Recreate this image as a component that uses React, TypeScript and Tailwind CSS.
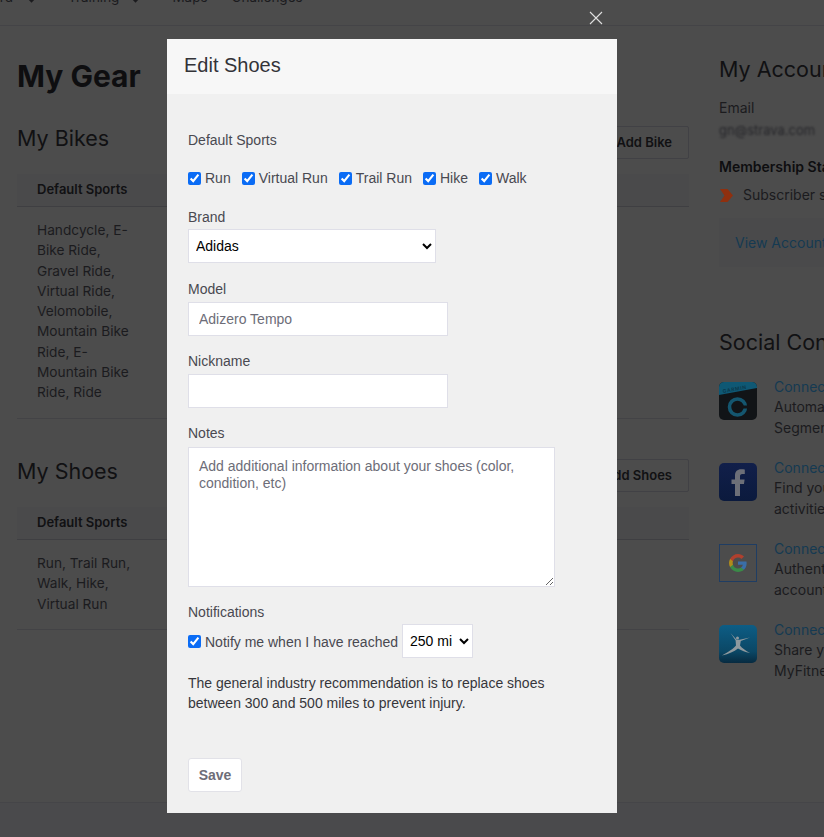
const Row = ({ label, children }: { label: string; children: React.ReactNode }) => (
    <div className="mt-[23px]">
        <div className="h-4 leading-4 mb-[4px]">{label}</div>
        {children}
    </div>
);

const Sport = ({ label }: { label: string }) => (
    <label className="flex items-center">
        <input type="checkbox" defaultChecked readOnly className="w-[13px] h-[13px] accent-[#0b6cf5] mr-[4px] ml-0" />
        <span>{label}</span>
    </label>
);

const Chevron = ({ className }: { className: string }) => (
    <svg width="9" height="6" viewBox="0 0 9 6" className={className}>
        <path d="M1 1L4.5 4.5L8 1" fill="none" stroke="#1b1b1e" strokeWidth="1.6" />
    </svg>
);

const GarminIcon = () => (
    <svg width="38" height="38" viewBox="0 0 38 38" className="rounded-[5px] shrink-0">
        <rect width="38" height="38" fill="#111417" />
        <path d="M0 0H38V6L0 13Z" fill="#0f5874" />
        <text x="4" y="11" fontSize="5" letterSpacing="0.6" fill="#0b3a4e" transform="rotate(-10 4 11)" fontFamily="Inter, sans-serif" fontWeight="700">GARMIN</text>
        <circle cx="18.5" cy="25" r="8" fill="none" stroke="#14566f" strokeWidth="3.6" />
        <rect x="24" y="23.5" width="6" height="3" fill="#111417" />
    </svg>
);

const FacebookIcon = () => (
    <svg width="38" height="38" viewBox="0 0 38 38" className="rounded-[5px] shrink-0">
        <defs>
            <linearGradient id="fb" x1="0" y1="0" x2="0" y2="1">
                <stop offset="0" stopColor="#111f4a" />
                <stop offset="1" stopColor="#0b1a3d" />
            </linearGradient>
        </defs>
        <rect width="38" height="38" fill="url(#fb)" />
        <path d="M21 33V21H25L25.6 16.5H21V13.5C21 12.2 21.5 11 23.3 11H25.8V6.6C25.2 6.5 23.7 6.3 22 6.3C18.4 6.3 16 8.4 16 12.5V16.5H12.5V21H16V33Z" fill="#6c6f78" />
    </svg>
);

const GoogleIcon = () => (
    <svg width="38" height="38" viewBox="0 0 38 38" className="shrink-0">
        <rect x="0.5" y="0.5" width="37" height="37" fill="none" stroke="#1f3d63" />
        <g transform="translate(10 10) scale(0.75)">
            <path d="M23.5 12.3c0-.8-.1-1.6-.2-2.3H12v4.4h6.5c-.3 1.5-1.1 2.7-2.4 3.6v3h3.8c2.3-2.1 3.6-5.2 3.6-8.7z" fill="#3a6ea8" />
            <path d="M12 24c3.2 0 6-1.1 7.9-2.9l-3.8-3c-1.1.7-2.4 1.2-4.1 1.2-3.1 0-5.8-2.1-6.7-5H1.4v3.1C3.4 21.3 7.4 24 12 24z" fill="#3a8a48" />
            <path d="M5.3 14.3c-.2-.7-.4-1.5-.4-2.3s.1-1.6.4-2.3V6.6H1.4C.5 8.2 0 10 0 12s.5 3.8 1.4 5.4z" fill="#b08c1c" />
            <path d="M12 4.8c1.8 0 3.3.6 4.6 1.8l3.4-3.4C17.9 1.2 15.2 0 12 0 7.4 0 3.4 2.7 1.4 6.6l3.9 3.1c.9-2.9 3.6-4.9 6.7-4.9z" fill="#b0402e" />
        </g>
    </svg>
);

const FitnessIcon = () => (
    <svg width="38" height="38" viewBox="0 0 38 38" className="rounded-[5px] shrink-0">
        <defs>
            <linearGradient id="mfp" x1="0" y1="0" x2="0" y2="1">
                <stop offset="0" stopColor="#0d5d85" />
                <stop offset="0.7" stopColor="#0b4765" />
                <stop offset="1" stopColor="#072a40" />
            </linearGradient>
        </defs>
        <rect width="38" height="38" fill="url(#mfp)" />
        <circle cx="18.5" cy="13" r="1.5" fill="#8f999e" />
        <path d="M11.5 8L16.6 15.5L17 20.5C14 24 10 26.5 3 30.5C10 29 15 26.5 19 23.5C23 25.5 26 27 31 28C26.5 25.5 23 23 21 20.5L21.8 16L31 12.5L20.5 14.8H17.6Z" fill="#8f999e" />
    </svg>
);

const Social = ({ icon, name, lines }: { icon: React.ReactNode; name: string; lines: string[] }) => (
    <div className="flex gap-[17px] h-[81px] items-start">
        <div>{icon}</div>
        <div className="text-sm leading-[20.3px] -mt-[5px] whitespace-nowrap text-[#1b1b1e]">
            <div className="text-[#153a52]">Connect with {name}</div>
            {lines.map((l) => <div key={l}>{l}</div>)}
        </div>
    </div>
);

const GearSection = ({ title, button, sports, rowH }: { title: string; button: string; sports: string; rowH: string }) => (
    <section>
        <div className="flex justify-between items-center h-[33px]">
            <h2 className="text-[21.5px] leading-[30px] mb-[10px] text-[#111113]">{title}</h2>
            <button className="h-[33px] px-4 border border-[#414145] rounded-[2px] text-[13px] font-semibold text-[#111113]">{button}</button>
        </div>
        <div className="mt-[15px] h-[33px] bg-[#4a4a4b] border-b border-[#3f3f42] pl-5 flex items-center text-[13px] font-semibold text-[#111113]">Default Sports</div>
        <div className={`${rowH} border-b border-[#434346] pl-5 pt-[13px] w-full text-[13.7px] leading-[20.3px] text-[#1b1b1e]`}>
            <div className="w-[100px]">{sports}</div>
        </div>
    </section>
);

export default function App() {
    return (
        <div className="relative h-[837px] w-[824px] overflow-hidden bg-[#4c4c4c] font-['Inter',sans-serif]">
            <nav className="h-[26px] border-b border-[#444447] flex items-end pb-[18px] text-[13.5px] text-[#1b1b1e] leading-[20px] -ml-[57px] whitespace-nowrap">
                <span className="w-[70px] text-right">Dashboard</span>
                <Chevron className="ml-[14px] mb-[4px]" />
                <span className="ml-[32px]">Training</span>
                <Chevron className="ml-[12px] mb-[4px]" />
                <span className="ml-[32px]">Maps</span>
                <span className="ml-[24px]">Challenges</span>
            </nav>
            <div className="flex pl-[17px] gap-[30px] pt-[31px]">
                <div className="w-[672px] shrink-0">
                    <h1 className="text-[30px] leading-[38px] font-bold text-[#0e0e10]">My Gear</h1>
                    <div className="mt-[31px]">
                        <GearSection title="My Bikes" button="Add Bike" rowH="h-[212px]"
                            sports="Handcycle, E-Bike Ride, Gravel Ride, Virtual Ride, Velomobile, Mountain Bike Ride, E-Mountain Bike Ride, Ride" />
                    </div>
                    <div className="mt-[40px]">
                        <GearSection title="My Shoes" button="Add Shoes" rowH="h-[90px]"
                            sports="Run, Trail Run, Walk, Hike, Virtual Run" />
                    </div>
                </div>
                <div className="w-[300px] shrink-0 text-sm text-[#1b1b1e]">
                    <h2 className="text-[21.5px] leading-[30px] text-[#111113] mt-[-3px] whitespace-nowrap">My Account</h2>
                    <div className="mt-[14px] leading-5">Email</div>
                    <div className="leading-5 mt-[2px] blur-[1px] text-[13px] text-[#26262a]">gn@strava.com</div>
                    <div className="mt-[17px] leading-5 font-semibold text-[#0e0e10] whitespace-nowrap">Membership Status</div>
                    <div className="mt-[8px] flex items-center gap-[10px] leading-5 whitespace-nowrap">
                        <svg width="13" height="13" viewBox="0 0 13 13" className="ml-[1px]">
                            <path d="M0 0H7.5L13 6.5L7.5 13H0L4.5 6.5Z" fill="#8f300f" />
                        </svg>
                        Subscriber since 2019
                    </div>
                    <div className="mt-[13px] h-[49px] w-[300px] bg-[#4a4a4b] pl-4 flex items-center text-[#153a52] whitespace-nowrap">View Account</div>
                    <h2 className="mt-[60px] text-[21.5px] leading-[30px] text-[#111113] whitespace-nowrap">Social Connections</h2>
                    <div className="mt-[25px]">
                        <Social icon={<GarminIcon />} name="Garmin" lines={["Automatically upload your activities", "Segments and more"]} />
                        <Social icon={<FacebookIcon />} name="Facebook" lines={["Find your friends and share", "activities"]} />
                        <Social icon={<GoogleIcon />} name="Google" lines={["Authenticate with your Google", "account"]} />
                        <Social icon={<FitnessIcon />} name="MyFitnessPal" lines={["Share your activities with", "MyFitnessPal"]} />
                    </div>
                </div>
            </div>
            <div className="absolute left-0 right-0 bottom-0 h-[35px] border-t border-[#454548] bg-[#4a4a4c]" />

            <svg width="16" height="16" viewBox="0 0 16 16" className="absolute left-[588px] top-[10px]">
                <path d="M2 2L14 14M14 2L2 14" stroke="#e0e0e0" strokeWidth="1.1" />
            </svg>
            <div className="absolute left-[167px] top-[39px] w-[450px] h-[774px] bg-[#f0f0f0] font-['Liberation_Sans',sans-serif] text-sm text-[#494950]">
                <div className="h-[55px] bg-[#f7f7f7] pl-[17px] pb-[4px] flex items-center text-xl text-[#333338]">Edit Shoes</div>
                <form className="px-[21px] pt-[38px]">
                    <div className="h-4 leading-4">Default Sports</div>
                    <div className="mt-[22px] h-[16px] flex items-center gap-[11px] leading-4">
                        <Sport label="Run" />
                        <Sport label="Virtual Run" />
                        <Sport label="Trail Run" />
                        <Sport label="Hike" />
                        <Sport label="Walk" />
                    </div>
                    <Row label="Brand">
                        <select defaultValue="Adidas" className="block w-[248px] h-[34px] bg-white border border-[#dfdfe8] pl-[3px] text-black">
                            <option>Adidas</option>
                        </select>
                    </Row>
                    <div className="mt-[18px] h-4 leading-4 mb-[5px]">Model</div>
                    <input type="text" placeholder="Adizero Tempo" className="block w-[260px] h-[34px] bg-white border border-[#dfdfe8] px-[10px] placeholder:text-[#6d6d78]" />
                    <div className="mt-[17px] h-4 leading-4 mb-[5px]">Nickname</div>
                    <input type="text" className="block w-[260px] h-[34px] bg-white border border-[#dfdfe8] px-[10px]" />
                    <div className="mt-[17px] h-4 leading-4 mb-[6px]">Notes</div>
                    <textarea placeholder="Add additional information about your shoes (color, condition, etc)"
                        className="block w-[367px] h-[140px] bg-white border border-[#dfdfe8] px-[10px] py-[10px] leading-[17px] placeholder:text-[#6d6d78]" />
                    <div className="mt-[17px] h-4 leading-4">Notifications</div>
                    <div className="mt-[4px] flex items-center h-[34px]">
                        <input type="checkbox" defaultChecked readOnly className="w-[13px] h-[13px] accent-[#0b6cf5] mr-[4px]" />
                        <span className="mt-[1px]">Notify me when I have reached</span>
                        <select defaultValue="250 mi" className="ml-[4px] w-[71px] h-[34px] bg-white border border-[#dfdfe8] pl-[3px] text-black">
                            <option>250 mi</option>
                        </select>
                    </div>
                    <p className="mt-[15px] leading-5 text-[#36363b] w-[380px]">The general industry recommendation is to replace shoes between 300 and 500 miles to prevent injury.</p>
                    <button type="button" className="mt-[45px] w-[54px] h-[34px] bg-white border border-[#e2e2e8] rounded-[3px] font-bold text-[#6d6d78]">Save</button>
                </form>
            </div>
        </div>
    );
}
